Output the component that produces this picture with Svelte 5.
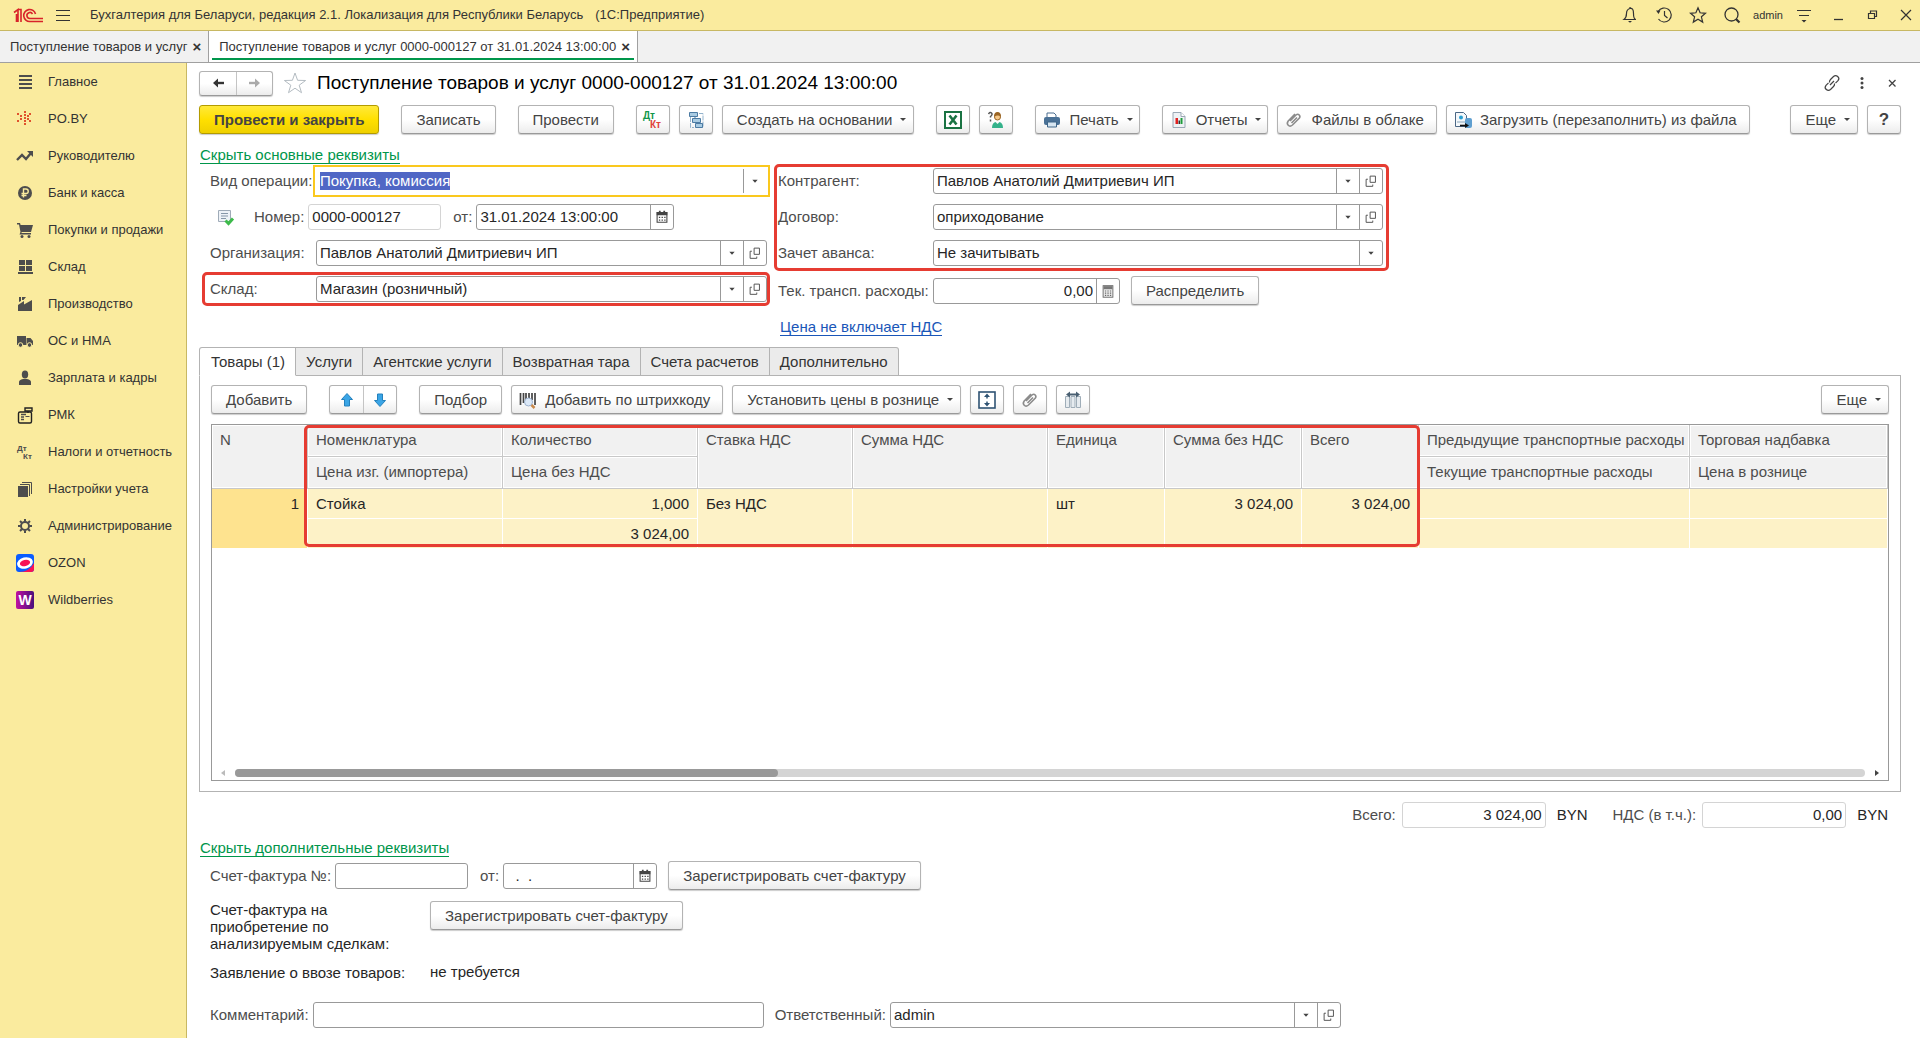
<script lang="ts">
	import { onMount } from 'svelte';

	type Column = {
		top: string;
		bottom?: string;
		value: string;
		bottomValue?: string;
		numeric?: boolean;
	};

	const sections = [
		{ icon: 'main', title: 'Главное' },
		{ icon: 'poby', title: 'PO.BY' },
		{ icon: 'chart', title: 'Руководителю' },
		{ icon: 'ruble', title: 'Банк и касса' },
		{ icon: 'cart', title: 'Покупки и продажи' },
		{ icon: 'boxes', title: 'Склад' },
		{ icon: 'factory', title: 'Производство' },
		{ icon: 'truck', title: 'ОС и НМА' },
		{ icon: 'person', title: 'Зарплата и кадры' },
		{ icon: 'till', title: 'РМК' },
		{ icon: 'taxes', title: 'Налоги и отчетность' },
		{ icon: 'books', title: 'Настройки учета' },
		{ icon: 'gear', title: 'Администрирование' },
		{ icon: 'ozon', title: 'OZON' },
		{ icon: 'wb', title: 'Wildberries' }
	];

	const tabs = [
		'Товары (1)',
		'Услуги',
		'Агентские услуги',
		'Возвратная тара',
		'Счета расчетов',
		'Дополнительно'
	];

	const columns: Column[] = [
		{ top: 'Номенклатура', bottom: 'Цена изг. (импортера)', value: 'Стойка', bottomValue: '' },
		{ top: 'Количество', bottom: 'Цена без НДС', value: '1,000', bottomValue: '3 024,00', numeric: true },
		{ top: 'Ставка НДС', value: 'Без НДС' },
		{ top: 'Сумма НДС', value: '' },
		{ top: 'Единица', value: 'шт' },
		{ top: 'Сумма без НДС', value: '3 024,00', numeric: true },
		{ top: 'Всего', value: '3 024,00', numeric: true },
		{ top: 'Предыдущие транспортные расходы', bottom: 'Текущие транспортные расходы', value: '', bottomValue: '' },
		{ top: 'Торговая надбавка', bottom: 'Цена в рознице', value: '', bottomValue: '' }
	];

	// inner markup of 18x18 icons
	const icons: Record<string, string> = {
		main: '<path d="M3 3h13M3 7h13M3 11h13M3 15h13" stroke="#4d4d4d" stroke-width="2"/>',
		poby: '<path fill="#e0522d" d="M8 1h2v2H8zM8 4h2v2H8zM8 7h2v2H8zM8 10h2v2H8zM8 13h2v2H8zM1 3h2v2H1zM13 3h2v2h-2zM4 5h2v2H4zM11 5h2v2h-2zM1 10h2v2H1zM13 10h2v2h-2zM4 8h2v2H4zM11 8h2v2h-2z"/>',
		chart: '<path d="M1 13l5-5 4 4 5-6" fill="none" stroke="#4d4d4d" stroke-width="2.4"/><path d="M11 4h6v6z" fill="#4d4d4d"/>',
		ruble: '<circle cx="9" cy="9" r="7" fill="#4d4d4d"/><path d="M7.500 13.500v-8.500h2.500a2.200 2.200 0 0 1 0 4.500H5.500M5.500 11.500h5" fill="none" stroke="#faeb9e" stroke-width="1.400"/>',
		cart: '<path d="M1 2h3l.600 2H17l-2 7H5.800l-.500 1H15v1.600H3.500L4.500 11 3 3.500H1z" fill="#4d4d4d"/><circle cx="6" cy="15.500" r="1.500" fill="#4d4d4d"/><circle cx="13" cy="15.500" r="1.500" fill="#4d4d4d"/>',
		boxes: '<path d="M3 2h6v5H3zM10 2h6v5h-6zM3 8h6v5H3zM10 8h6v5h-6zM2 14h15v2H2z" fill="#4d4d4d"/>',
		factory: '<path d="M2 16v-6l6-4v3.500L16 5v11zM3 2h2v4L3 7zM6 2h4L7.500 5H6z" fill="#4d4d4d"/>',
		truck: '<path d="M1 4h9v9H1zM10.500 6h4l2.500 3v4h-6.500z" fill="#4d4d4d"/><circle cx="4.500" cy="13" r="2.300" fill="#4d4d4d" stroke="#faeb9e"/><circle cx="13.500" cy="13" r="2.300" fill="#4d4d4d" stroke="#faeb9e"/>',
		person: '<ellipse cx="9" cy="5.500" rx="3.200" ry="4" fill="#4d4d4d"/><path d="M3 16v-3q0-2 4-3h4q4 1 4 3v3z" fill="#4d4d4d"/>',
		till: '<rect x="2.500" y="6" width="13" height="11" rx="1.500" fill="none" stroke="#222" stroke-width="1.400"/><path d="M9 2h7v3H9zM12 5v2" fill="none" stroke="#222" stroke-width="1.400"/><path d="M5 8.500h5M5 11h3M5 13.500h3" stroke="#4d4d4d" stroke-width="1.400"/><path d="M9.500 10.500h4" stroke="#4d4d4d"/>',
		taxes: '<g fill="#4d4d4d" font-family="Liberation Sans" font-weight="bold" font-size="8"><text x="1" y="8">Дт</text><text x="7" y="16">Кт</text></g>',
		books: '<path d="M2 6h10v11H2z" fill="#4d4d4d"/><path d="M4 4.500h9.500V16M6 2.500h9.500V14" fill="none" stroke="#4d4d4d"/>',
		gear: '<circle cx="9" cy="9" r="4" fill="none" stroke="#4d4d4d" stroke-width="2"/><path d="M9 2v2.500M9 13.500V16M2 9h2.500M13.500 9H16M4 4l1.800 1.800M12.200 12.200L14 14M4 14l1.800-1.800M12.200 5.800L14 4" stroke="#4d4d4d" stroke-width="2"/>',
		ozon: '<rect width="18" height="18" rx="3" fill="#0a5cff"/><path d="M3 18q10 0 15-9v6q0 3-3 3z" fill="#f91155"/><ellipse cx="9" cy="9" rx="8" ry="5.600" fill="#fff" transform="rotate(-14 9 9)"/><ellipse cx="9" cy="9" rx="5.200" ry="3.200" fill="#f91155" transform="rotate(-14 9 9)"/>',
		wb: '<defs><linearGradient id="wb"><stop stop-color="#c010a0"/><stop offset="1" stop-color="#4a0f7c"/></linearGradient></defs><rect width="18" height="18" rx="2" fill="url(#wb)"/><text x="9" y="14" text-anchor="middle" font-family="Liberation Sans" font-weight="bold" font-size="14" fill="#fff">W</text>',
		bell: '<path d="M3 13.500q2.500-2 2.500-6T9 2.500t3.500 5 2.500 6zM9 1v2" fill="none" stroke="#333" stroke-width="1.200"/><path d="M7 15h4l-2 1.800z" fill="#333"/>',
		history: '<path d="M3.200 5.500A7 7 0 1 1 3.500 13M9.500 5v4.500l3 2.500" fill="none" stroke="#333" stroke-width="1.200"/><path d="M1 4.500l4.500 0L3.500 8z" fill="#333"/>',
		star: '<path d="M9 1.800l2.100 5 5.400.500-4.100 3.500 1.300 5.300L9 13.200l-4.700 2.900 1.300-5.300-4.100-3.500 5.400-.500z" fill="none" stroke="#333" stroke-width="1.200"/>',
		search: '<circle cx="8.500" cy="8.500" r="6.500" fill="none" stroke="#333" stroke-width="1.300"/><path d="M13 13l3.500 3.500" stroke="#333" stroke-width="2.200"/>',
		options: '<path d="M2 4.500h14M4 9.500h10" stroke="#333" stroke-width="1.200"/><path d="M6.500 14h5L9 16.500z" fill="#333"/>',
		minimize: '<path d="M5 13.500h9" stroke="#333" stroke-width="1.300"/>',
		restore: '<path d="M5.500 7.500h6v5h-6zM7.500 7.500v-2.500h6v5.500h-2" fill="none" stroke="#333" stroke-width="1.200"/>',
		close: '<path d="M4 4l10 10M14 4L4 14" stroke="#333" stroke-width="1.200"/>',
		link: '<path d="M6.500 8.500q-.300-1.700 1-3l3-3q2-1.800 4.200 0t.300 4.200l-2.500 2.500M11.500 9.500q.300 1.700-1 3l-3 3q-2 1.800-4.200 0t-.300-4.200L5.500 8.800M7 11l4-4" fill="none" stroke="#444" stroke-width="1.200"/>',
		dots: '<g fill="#444"><circle cx="9" cy="4.500" r="1.500"/><circle cx="9" cy="9" r="1.500"/><circle cx="9" cy="13.500" r="1.500"/></g>',
		cross: '<path d="M6 6l6.500 6.500M12.500 6L6 12.500" stroke="#444" stroke-width="1.300"/>',
		back: '<path d="M6 9h9" stroke="#333" stroke-width="2.400"/><path d="M9 4.500L4 9l5 4.500z" fill="#333"/>',
		forward: '<path d="M3 9h9" stroke="#aaa" stroke-width="2.400"/><path d="M9 4.500L14 9l-5 4.500z" fill="#aaa"/>',
		dtkt: '<g font-family="Liberation Sans" font-weight="bold" font-size="10"><text x="-1" y="8" fill="#11974a">Дт</text><text x="6" y="17" fill="#e0433a">Кт</text></g>',
		structure: '<path d="M3.500 6v10.500H7M12 2.500h4V16h-3" fill="none" stroke="#93b3cc" stroke-dasharray="5 1"/><path d="M2.500 1.500h8v4h-8zM5.500 7.500h8v4h-8zM8.500 12.500h7v4h-7zM8 5.500v2M11 11.500v1" fill="#a9cbe2" stroke="#4c7ba3"/>',
		excel: '<rect x="1" y="1" width="16" height="16" fill="#fff" stroke="#1a7343" stroke-width="2"/><path d="M5.500 4.500l7 9M12.500 4.500l-7 9" stroke="#1a7343" stroke-width="2.600"/>',
		helper: '<path d="M1.500 3Q3 .500 4.500 2T3.500 5.500v1M3.500 8.500v2" fill="none" stroke="#555" stroke-width="1.500"/><circle cx="10.500" cy="6" r="3" fill="#f6c888" stroke="#9a6423"/><path d="M7 5.500q0-4.500 3.500-4.500T14 5.500q-3-2-7 0z" fill="#9a6423"/><path d="M5 17q0-5 3.500-6l2 2 2-2q3.500 1 3.500 6z" fill="#35b28b"/>',
		printer: '<path d="M4 2h7l2 2v3H4z" fill="#fff" stroke="#4a6d8f"/><rect x="1" y="6" width="16" height="8" rx="2" fill="#4a7196"/><path d="M4.500 11h9v5h-9z" fill="#d7e6f2" stroke="#3f6689"/>',
		report: '<path d="M3 1.500h8l4 4v11H3z" fill="#eef2f5" stroke="#9aa8b5"/><path d="M11 1.500v4h4" fill="#fff" stroke="#9aa8b5"/><path d="M5.500 7h2.500v6H5.500z" fill="#e02020"/><path d="M8.500 9.500h1.500v3.500H8.500z" fill="#333"/><path d="M10.500 7h2v6h-2z" fill="#1f9c3a"/>',
		clip: '<path d="M5 10l6-6q1.800-1.500 3.200 0t0 3.300L7.500 14q-2.500 2-4.300.200t0-4.200L10 3M6.500 12l5.500-5.500" fill="none" stroke="#8c8c8c" stroke-width="1.600"/>',
		load: '<path d="M1.500 1.500h8l3 3v11h-11z" fill="#f4f8fb" stroke="#4b6785"/><circle cx="7" cy="6.500" r="2" fill="#2a9fd0"/><path d="M3 11h8" stroke="#8aa6ba"/><rect x="11" y="7" width="7" height="10" rx="2" fill="#5f9fd0"/><path d="M6 14.500h6" stroke="#111" stroke-width="1.600"/><path d="M11 12l4 2.500-4 2.500z" fill="#111"/>',
		posted: '<path d="M1.500 2.500h12v11h-12z" fill="#eef2f7" stroke="#9fabb8"/><path d="M4 5.500h7M4 8h7M4 10.500h5" stroke="#8797a8"/><path d="M8.500 12.500l3 3 4.500-5" fill="none" stroke="#3dba4b" stroke-width="3"/>',
		up: '<path d="M9 2.500l5.500 6H11.500V15h-5V8.500H3.500z" fill="#3aa5e6" stroke="#2481bd"/>',
		down: '<path d="M9 15.500l5.500-6H11.500V3h-5v6.500H3.500z" fill="#3aa5e6" stroke="#2481bd"/>',
		barcode: '<path d="M1.500 2v12M4.500 2v10M7 2v8M10 2v6M13 2v7M16 2v12" stroke="#444" stroke-width="1.700"/><circle cx="9.500" cy="11" r="4" fill="#dce9f8" stroke="#9bb0cc"/><path d="M12.500 14l3 3" stroke="#c98a4c" stroke-width="2.500"/>',
		expand: '<rect x="1" y="1" width="16" height="16" fill="#fff" stroke="#2f5373" stroke-width="1.600"/><path d="M9 5v2.500M9 10.500V13" stroke="#2f5373" stroke-width="1.500"/><path d="M6 6l3-3.500L12 6zM6 12l3 3.500 3-3.500z" fill="#2f5373"/>',
		colwidth: '<path d="M1.500 5.500h4v11h-4zM7 5.500h4v11H7zM12.500 5.500h4v11h-4z" fill="#e6ebef" stroke="#9fadb8"/><path d="M2 3.500L6 .500v2h6v-2l4 3-4 3v-2H6v2z" fill="#4a6072"/>',
		calendar: '<path d="M3.500 4h11v11h-11z" fill="#fff" stroke="#444" stroke-width="1.200"/><path d="M3 3.500h12v3.500H3zM5.500 2h2v2h-2zM10.500 2h2v2h-2z" fill="#444"/><path d="M5.500 9.500h7.500M5.500 12.500h7.500" stroke="#444" stroke-width="1.500" stroke-dasharray="1.500 1.500"/>',
		calc: '<rect x="3.500" y="3" width="11" height="13" fill="#eee" stroke="#666"/><path d="M4 3.500h10V7H4z" fill="#777"/><path d="M5.500 9h8M5.500 11.500h8M5.500 14h8" stroke="#666" stroke-width="1.400" stroke-dasharray="1.500 1.300"/>',
		open: '<path d="M8 3.500h6v7H8z" fill="none" stroke="#444"/><path d="M5.500 7H3.500v8H11v-2" fill="none" stroke="#444"/>',
		caret: '<path d="M6 7.500h6L9 11z" fill="#444"/>'
	};

	let activeTab = $state(0);
	let kindInput: HTMLInputElement;

	onMount(() => {
		kindInput.focus();
		kindInput.select();
	});
</script>

{#snippet icon(name: string)}
	<svg class="icon" viewBox="0 0 18 18" aria-hidden="true">{@html icons[name]}</svg>
{/snippet}

{#snippet pickers(names: string[])}
	{#each names as name}
		<button class="pick" aria-label={name}>{@render icon(name)}</button>
	{/each}
{/snippet}

<div class="app">
	<header class="topbar">
		<svg class="logo" viewBox="0 0 30 16" aria-label="1С">
			<g fill="none" stroke="#d8232a" stroke-width="1.600">
				<path d="M1 5.500l4-3v12.500M3.500 7v8M5 2.500h3V15" />
				<path d="M22.500 7A6 6 0 1 0 17 14.500h13" />
				<path d="M19.500 7A3 3 0 1 0 17 11.500h13" />
			</g>
		</svg>
		<button class="bare" aria-label="Меню">
			<svg class="icon" viewBox="0 0 18 18"><path d="M2 4.500h14M2 9.500h14M2 14.500h14" stroke="#333" stroke-width="1.200" /></svg>
		</button>
		<span class="app-title">Бухгалтерия для Беларуси, редакция 2.1. Локализация для Республики Беларусь</span>
		<span>(1С:Предприятие)</span>
		<div class="top-actions">
			<button class="bare" aria-label="Оповещения">{@render icon('bell')}</button>
			<button class="bare" aria-label="История">{@render icon('history')}</button>
			<button class="bare" aria-label="Избранное">{@render icon('star')}</button>
			<button class="bare" aria-label="Поиск">{@render icon('search')}</button>
			<span class="user">admin</span>
			<button class="bare" aria-label="Сервис">{@render icon('options')}</button>
			<button class="bare" aria-label="Свернуть">{@render icon('minimize')}</button>
			<button class="bare" aria-label="Восстановить">{@render icon('restore')}</button>
			<button class="bare" aria-label="Закрыть">{@render icon('close')}</button>
		</div>
	</header>

	<nav class="windows">
		<div class="window-tab">Поступление товаров и услуг <button class="tab-close" aria-label="Закрыть">×</button></div>
		<div class="window-tab current">
			Поступление товаров и услуг 0000-000127 от 31.01.2024 13:00:00
			<button class="tab-close" aria-label="Закрыть">×</button>
		</div>
	</nav>

	<div class="body">
		<nav class="sidebar">
			{#each sections as section}
				<a href="#{section.icon}">{@render icon(section.icon)}{section.title}</a>
			{/each}
		</nav>

		<main>
			<div class="heading">
				<div class="pair">
					<button aria-label="Назад">{@render icon('back')}</button>
					<button aria-label="Вперед">{@render icon('forward')}</button>
				</div>
				<button class="bare favorite" aria-label="В избранное">
					<svg viewBox="0 0 24 24"><path d="M12 2l2.600 7.300 8 .200-6.400 4.700 2.300 7.500L12 17.200l-6.500 4.500 2.300-7.500-6.400-4.700 8-.200z" fill="none" stroke="#b4bcc2" /></svg>
				</button>
				<h1>Поступление товаров и услуг 0000-000127 от 31.01.2024 13:00:00</h1>
				<div class="heading-actions">
					<button class="bare" aria-label="Ссылка">{@render icon('link')}</button>
					<button class="bare" aria-label="Еще действия">{@render icon('dots')}</button>
					<button class="bare" aria-label="Закрыть">{@render icon('cross')}</button>
				</div>
			</div>

			<div class="toolbar">
				<button class="btn primary">Провести и закрыть</button>
				<button class="btn">Записать</button>
				<button class="btn">Провести</button>
				<div class="group">
					<button class="btn square" aria-label="Дт/Кт">{@render icon('dtkt')}</button>
					<button class="btn square" aria-label="Структура подчиненности">{@render icon('structure')}</button>
					<button class="btn drop">Создать на основании<i class="caret"></i></button>
				</div>
				<div class="group">
					<button class="btn square" aria-label="Excel">{@render icon('excel')}</button>
					<button class="btn square" aria-label="Помощник">{@render icon('helper')}</button>
				</div>
				<button class="btn with-icon drop">{@render icon('printer')}Печать<i class="caret"></i></button>
				<div class="group">
					<button class="btn with-icon drop">{@render icon('report')}Отчеты<i class="caret"></i></button>
					<button class="btn with-icon">{@render icon('clip')}Файлы в облаке</button>
					<button class="btn with-icon">{@render icon('load')}Загрузить (перезаполнить) из файла</button>
				</div>
				<div class="group right">
					<button class="btn drop">Еще<i class="caret"></i></button>
					<button class="btn square help">?</button>
				</div>
			</div>

			<a class="toggle" href="#main-props">Скрыть основные реквизиты</a>

			<div class="props" id="main-props">
				<div class="column">
					<div class="row">
						<label for="kind">Вид операции:</label>
						<div class="field focused">
							<input id="kind" bind:this={kindInput} value="Покупка, комиссия" />
							{@render pickers(['caret'])}
						</div>
					</div>
					<div class="row number-row">
						{@render icon('posted')}
						<label for="number">Номер:</label>
						<div class="field readonly short"><input id="number" value="0000-000127" readonly /></div>
						<label for="date">от:</label>
						<div class="field date"><input id="date" value="31.01.2024 13:00:00" />{@render pickers(['calendar'])}</div>
					</div>
					<div class="row">
						<label for="org">Организация:</label>
						<div class="field"><input id="org" value="Павлов Анатолий Дмитриевич ИП" />{@render pickers(['caret', 'open'])}</div>
					</div>
					<div class="row marked stock">
						<label for="stock">Склад:</label>
						<div class="field"><input id="stock" value="Магазин (розничный)" />{@render pickers(['caret', 'open'])}</div>
					</div>
				</div>

				<div class="column second">
					<div class="marked partner">
						<div class="row">
							<label for="partner">Контрагент:</label>
							<div class="field"><input id="partner" value="Павлов Анатолий Дмитриевич ИП" />{@render pickers(['caret', 'open'])}</div>
						</div>
						<div class="row">
							<label for="contract">Договор:</label>
							<div class="field"><input id="contract" value="оприходование" />{@render pickers(['caret', 'open'])}</div>
						</div>
						<div class="row">
							<label for="advance">Зачет аванса:</label>
							<div class="field">
								<select id="advance"><option>Не зачитывать</option></select>
								{@render pickers(['caret'])}
							</div>
						</div>
					</div>
					<div class="row costs">
						<label for="costs">Тек. трансп. расходы:</label>
						<div class="field sum"><input id="costs" value="0,00" />{@render pickers(['calc'])}</div>
						<button class="btn">Распределить</button>
					</div>
					<a class="vat" href="#vat">Цена не включает НДС</a>
				</div>
			</div>

			<div class="tabs" role="tablist">
				{#each tabs as tab, i}
					<button role="tab" aria-selected={i === activeTab} class:active={i === activeTab} onclick={() => (activeTab = i)}>{tab}</button>
				{/each}
			</div>

			<section class="panel">
				<div class="toolbar">
					<button class="btn">Добавить</button>
					<div class="pair arrows">
						<button aria-label="Переместить вверх">{@render icon('up')}</button>
						<button aria-label="Переместить вниз">{@render icon('down')}</button>
					</div>
					<div class="group">
						<button class="btn">Подбор</button>
						<button class="btn with-icon">{@render icon('barcode')}Добавить по штрихкоду</button>
						<button class="btn drop">Установить цены в рознице<i class="caret"></i></button>
						<button class="btn square" aria-label="Развернуть">{@render icon('expand')}</button>
						<button class="btn square" aria-label="Файлы">{@render icon('clip')}</button>
						<button class="btn square" aria-label="Ширина колонок">{@render icon('colwidth')}</button>
					</div>
					<div class="group right"><button class="btn drop">Еще<i class="caret"></i></button></div>
				</div>

				<div class="grid">
					<div class="grid-scroll">
						<table>
							<colgroup>
								<col class="w-n" />
								<col class="w-wide" />
								<col class="w-wide" />
								<col class="w-rate" />
								<col class="w-wide" />
								<col class="w-unit" />
								<col class="w-net" />
								<col class="w-total" />
								<col class="w-transport" />
								<col />
							</colgroup>
							<thead>
								<tr>
									<th rowspan="2">N</th>
									{#each columns as column}
										<th rowspan={column.bottom ? 1 : 2}>{column.top}</th>
									{/each}
								</tr>
								<tr>
									{#each columns.filter((c) => c.bottom) as column}
										<th>{column.bottom}</th>
									{/each}
								</tr>
							</thead>
							<tbody>
								<tr>
									<td rowspan="2" class="num line">1</td>
									{#each columns as column}
										<td rowspan={column.bottom ? 1 : 2} class:num={column.numeric}>{column.value}</td>
									{/each}
								</tr>
								<tr>
									{#each columns.filter((c) => c.bottom) as column}
										<td class:num={column.numeric}>{column.bottomValue}</td>
									{/each}
								</tr>
							</tbody>
						</table>
						<div class="frame"></div>
					</div>
					<div class="scrollbar">
						<i class="arrow left"></i>
						<div class="track"><div class="thumb"></div></div>
						<i class="arrow"></i>
					</div>
				</div>
			</section>

			<div class="totals">
				<label for="total">Всего:</label>
				<div class="field readonly"><input id="total" value="3 024,00" readonly /></div>
				<span>BYN</span>
				<label for="vat-total">НДС (в т.ч.):</label>
				<div class="field readonly"><input id="vat-total" value="0,00" readonly /></div>
				<span>BYN</span>
			</div>

			<a class="toggle" href="#extra">Скрыть дополнительные реквизиты</a>

			<div class="extra" id="extra">
				<div class="row invoice">
					<label for="invoice">Счет-фактура №:</label>
					<div class="field short"><input id="invoice" /></div>
					<label for="invoice-date">от:</label>
					<div class="field invoice-date"><input id="invoice-date" value="&nbsp;&nbsp;.&nbsp;&nbsp;." />{@render pickers(['calendar'])}</div>
					<button class="btn">Зарегистрировать счет-фактуру</button>
				</div>
				<div class="row purchase">
					<span class="caption">Счет-фактура на<br />приобретение по<br />анализируемым сделкам:</span>
					<button class="btn">Зарегистрировать счет-фактуру</button>
				</div>
				<div class="row import">
					<span class="caption">Заявление о ввозе товаров:</span>
					<span>не требуется</span>
				</div>
				<div class="row comment">
					<label for="comment">Комментарий:</label>
					<div class="field note"><input id="comment" /></div>
					<label for="owner">Ответственный:</label>
					<div class="field owner"><input id="owner" value="admin" />{@render pickers(['caret', 'open'])}</div>
				</div>
			</div>
		</main>
	</div>
</div>

<style>
	:global(body) {
		margin: 0;
		background: #fff;
	}

	.app {
		display: flex;
		flex-direction: column;
		min-height: 100vh;
		font: 15px/18px 'Liberation Sans', Arial, sans-serif;
		color: #262626;
	}

	.app * {
		box-sizing: border-box;
	}

	button,
	input,
	select {
		font: inherit;
		color: inherit;
		margin: 0;
	}

	a {
		color: inherit;
		text-decoration: none;
	}

	.icon {
		width: 18px;
		height: 18px;
		flex: none;
		overflow: visible;
	}

	.bare {
		display: flex;
		padding: 0;
		border: 0;
		background: none;
	}

	.topbar {
		display: flex;
		align-items: center;
		height: 31px;
		padding: 0 5px 0 13px;
		border-bottom: 1px solid #c8b863;
		background: #faeb9e;
		font-size: 13px;
		color: #333;
	}

	.logo {
		width: 30px;
		height: 16px;
		margin-right: 11px;
	}

	.app-title {
		margin: 0 12px 0 18px;
	}

	.top-actions {
		display: flex;
		align-items: center;
		gap: 16px;
		margin-left: auto;
	}

	.user {
		margin: 0 -4px;
		font-size: 11px;
	}

	.windows {
		display: flex;
		height: 32px;
		border-bottom: 1px solid #a0a0a0;
		background: #f1f1f1;
		font-size: 13px;
	}

	.window-tab {
		display: flex;
		align-items: center;
		gap: 5px;
		padding: 0 7px 0 10px;
		border-right: 1px solid #a0a0a0;
		color: #333;
	}

	.window-tab.current {
		position: relative;
		background: #fff;
	}

	.window-tab.current::after {
		content: '';
		position: absolute;
		inset: auto 3px 2px;
		height: 2px;
		background: #00964b;
	}

	.tab-close {
		padding: 0;
		border: 0;
		background: none;
		font-weight: bold;
		font-size: 15px;
		line-height: 16px;
	}

	.body {
		display: flex;
		flex: 1;
	}

	.sidebar {
		flex: none;
		width: 187px;
		border-right: 1px solid #c8b863;
		background: #faeb9e;
		font-size: 13px;
		color: #333;
	}

	.sidebar a {
		display: flex;
		align-items: center;
		gap: 14px;
		height: 37px;
		padding-left: 16px;
		white-space: nowrap;
	}

	main {
		display: flex;
		flex: 1;
		flex-direction: column;
		min-width: 0;
		padding: 8px 19px 10px 12px;
	}

	.heading {
		display: flex;
		align-items: center;
		height: 24px;
		margin-bottom: 10px;
	}

	.pair {
		display: flex;
		height: 25px;
		border: 1px solid #b3b3b3;
		border-bottom-color: #999;
		border-radius: 3px;
		box-shadow: 0 1px 1px #ccc;
		background: linear-gradient(#fff 50%, #ececec);
	}

	.pair button {
		display: flex;
		align-items: center;
		justify-content: center;
		width: 36px;
		padding: 0;
		border: 0;
		background: none;
	}

	.pair button + button {
		border-left: 1px solid #c4c4c4;
	}

	.favorite {
		margin: 0 10px;
	}

	.favorite svg {
		width: 24px;
		height: 24px;
	}

	h1 {
		margin: 0;
		font-size: 19px;
		font-weight: normal;
		color: #000;
	}

	.heading-actions {
		display: flex;
		gap: 12px;
		margin-left: auto;
	}

	.toolbar {
		display: flex;
		gap: 22px;
	}

	.group {
		display: flex;
		gap: 9px;
	}

	.right {
		margin-left: auto;
	}

	.btn {
		display: flex;
		align-items: center;
		justify-content: center;
		height: 29px;
		padding: 0 14px;
		border: 1px solid #b3b3b3;
		border-bottom-color: #999;
		border-radius: 3px;
		box-shadow: 0 1px 1px #ccc;
		background: linear-gradient(#fff 50%, #ececec);
		color: #444;
		white-space: nowrap;
	}

	.btn.primary {
		border-color: #b39b00;
		background: linear-gradient(#ffe93a, #ffe000 50%, #efd000);
		font-weight: bold;
	}

	.btn.square {
		width: 34px;
		padding: 0;
	}

	.btn.help {
		font-weight: bold;
		font-size: 17px;
	}

	.btn.drop {
		padding-right: 7px;
	}

	.btn.with-icon {
		gap: 8px;
		padding: 0 12px 0 7px;
	}

	.btn.with-icon.drop {
		padding-right: 6px;
	}

	.caret {
		margin-left: 8px;
		border: solid transparent;
		border-width: 3px 3px 0;
		border-top-color: #444;
	}

	.with-icon .caret {
		margin-left: 0;
	}

	.toggle {
		align-self: flex-start;
		margin: 12px 0 4px 1px;
		border-bottom: 1px solid #00964b;
		line-height: 17px;
		color: #00964b;
	}

	.totals + .toggle {
		margin-top: 11px;
	}

	.props {
		display: flex;
		gap: 11px;
		padding-left: 11px;
	}

	.column {
		display: flex;
		flex-direction: column;
		gap: 10px;
		width: 557px;
	}

	.column.second {
		width: 605px;
	}

	.row {
		display: flex;
		align-items: center;
		height: 26px;
	}

	label {
		color: #4d4d4d;
		white-space: nowrap;
	}

	.column > .row > label:first-child {
		width: 106px;
	}

	.field {
		display: flex;
		flex: 1;
		height: 26px;
		border: 1px solid #999;
		border-radius: 3px;
		background: #fff;
	}

	.field input,
	.field select {
		flex: 1;
		width: 0;
		min-width: 0;
		padding: 0 3px;
		border: 0;
		outline: 0;
		background: none;
		appearance: none;
	}

	.field ::selection {
		background: #5067c5;
		color: #fff;
	}

	.pick {
		display: flex;
		flex: none;
		align-items: center;
		justify-content: center;
		width: 23px;
		padding: 0;
		border: 0;
		border-left: 1px solid #999;
		background: none;
	}

	.pick .icon {
		width: 16px;
		height: 16px;
	}

	.field.readonly {
		border-color: #d4d4d4;
	}

	.field.focused {
		height: 32px;
		margin: -3px;
		padding: 2px;
		border: 2px solid #fac81e;
		border-radius: 0;
	}

	.number-row > .icon {
		margin: 0 19px 0 7px;
	}

	.number-row label,
	.invoice label {
		margin-right: 4px;
	}

	.field.short {
		flex: none;
		width: 133px;
		margin-right: 12px;
	}

	.field.date {
		flex: none;
		width: 198px;
	}

	.marked {
		position: relative;
	}

	.marked::after {
		content: '';
		position: absolute;
		border: 3px solid #e63c32;
		border-radius: 5px;
		pointer-events: none;
	}

	.stock::after {
		inset: -4px -3px -4px -8px;
	}

	.partner {
		display: flex;
		flex-direction: column;
		gap: 10px;
	}

	.partner::after {
		inset: -4px -6px -5px -4px;
	}

	.partner label,
	.column.second > .row > label:first-child {
		width: 155px;
	}

	.costs {
		height: 29px;
	}

	.costs .btn {
		margin-left: 11px;
	}

	.field.sum {
		flex: none;
		width: 187px;
	}

	.sum input,
	.totals input {
		text-align: right;
	}

	.vat {
		align-self: flex-start;
		margin: 3px 0 0 2px;
		border-bottom: 1px solid #1a56b8;
		line-height: 17px;
		color: #1a56b8;
	}

	.tabs {
		position: relative;
		display: flex;
		height: 29px;
		margin: 11px 0 -1px;
	}

	.tabs button {
		padding: 0 10px;
		border: 1px solid #b3b3b3;
		border-left-width: 0;
		background: #ebebeb;
		color: #333;
	}

	.tabs button:first-child {
		padding-left: 11px;
		border-left-width: 1px;
		border-top-left-radius: 3px;
	}

	.tabs button:last-child {
		border-top-right-radius: 3px;
	}

	.tabs .active {
		border-bottom-color: #fff;
		background: #fff;
	}

	.panel {
		display: flex;
		flex: 1;
		flex-direction: column;
		gap: 10px;
		padding: 9px 11px 10px;
		border: 1px solid #b3b3b3;
	}

	.arrows {
		height: 29px;
	}

	.arrows button {
		width: 33px;
	}

	.grid {
		display: flex;
		flex: 1;
		flex-direction: column;
		border: 1px solid #999;
	}

	.grid-scroll {
		position: relative;
		flex: 1;
	}

	table {
		width: 100%;
		table-layout: fixed;
		border-collapse: separate;
		border-spacing: 0;
	}

	.w-n {
		width: 96px;
	}

	.w-wide {
		width: 195px;
	}

	.w-rate {
		width: 155px;
	}

	.w-unit {
		width: 117px;
	}

	.w-net {
		width: 137px;
	}

	.w-total {
		width: 117px;
	}

	.w-transport {
		width: 271px;
	}

	th,
	td {
		padding: 6px 8px 5px;
		text-align: left;
		vertical-align: top;
		white-space: nowrap;
	}

	th {
		height: 32px;
		border-right: 1px solid #c8c8c8;
		border-bottom: 1px solid #c8c8c8;
		box-shadow: inset 0 0 0 1px #fff;
		background: #f1f1f1;
		font-weight: normal;
		color: #4d4d4d;
	}

	td {
		height: 30px;
		border-right: 1px solid #fff;
		border-bottom: 1px solid #fff;
		background: #fdf2c7;
	}

	.num {
		text-align: right;
	}

	.line {
		background: #fee38f;
	}

	.frame {
		position: absolute;
		top: 0;
		left: 92px;
		width: 1116px;
		height: 122px;
		border: 3px solid #e63c32;
		border-radius: 5px;
		pointer-events: none;
	}

	.scrollbar {
		display: flex;
		align-items: center;
		gap: 10px;
		padding: 0 9px 3px;
	}

	.track {
		flex: 1;
		height: 8px;
		border-radius: 4px;
		background: #d4d4d4;
	}

	.thumb {
		width: calc(100% / 3);
		height: 8px;
		border-radius: 4px;
		background: #999;
	}

	.arrow {
		border: solid transparent;
		border-width: 3px 0 3px 4px;
		border-left-color: #444;
	}

	.arrow.left {
		border-width: 3px 4px 3px 0;
		border-right-color: #bbb;
	}

	.totals {
		display: flex;
		align-items: center;
		justify-content: flex-end;
		margin: 10px 13px 0 0;
	}

	.totals label {
		margin-right: 6px;
	}

	.totals .field {
		flex: none;
		width: 144px;
		margin-right: 11px;
	}

	.totals label:not(:first-child) {
		margin-left: 25px;
	}

	.extra {
		padding-left: 11px;
	}

	.extra .invoice {
		height: 29px;
	}

	.field.invoice-date {
		flex: none;
		width: 154px;
		margin-right: 11px;
	}

	.caption {
		width: 220px;
		line-height: 17px;
	}

	.purchase {
		align-items: flex-start;
		height: 52px;
		margin-top: 11px;
	}

	.import {
		height: 18px;
		margin-top: 10px;
	}

	.comment {
		margin-top: 21px;
	}

	.comment label {
		margin-right: 4px;
	}

	.field.note {
		flex: none;
		width: 451px;
		margin-right: 11px;
	}

	.field.owner {
		flex: none;
		width: 451px;
	}
</style>
